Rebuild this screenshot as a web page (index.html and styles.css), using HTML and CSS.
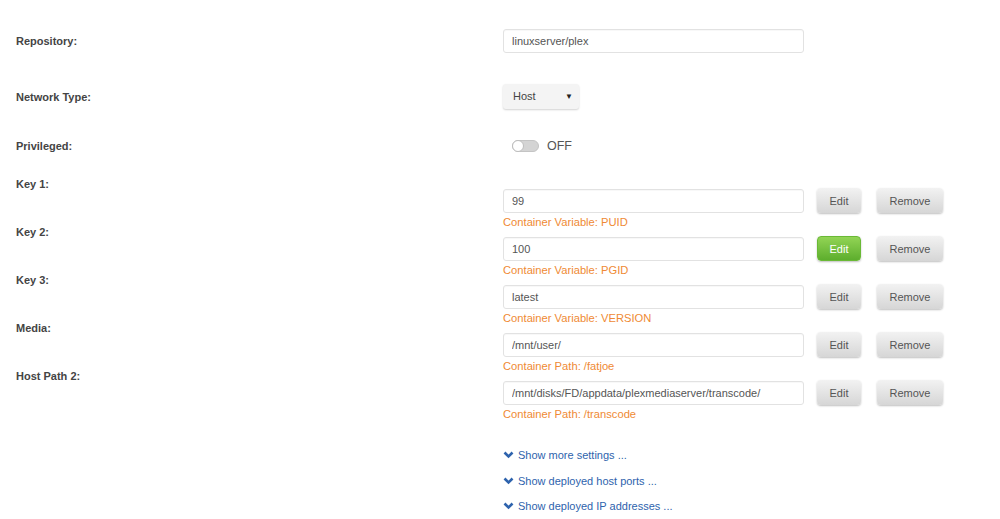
FILE: index.html
```html
<!DOCTYPE html>
<html lang="en">
<head>
  <meta charset="UTF-8" />
  <title>Docker template</title>
  <link rel="stylesheet" href="styles.css">
</head>
<body>
  <div class="form">
    <div class="row row-repo">
      <div class="name">Repository:</div>
      <div class="value"><input class="text" type="text" value="linuxserver/plex"></div>
    </div>

    <div class="row row-net">
      <div class="name">Network Type:</div>
      <div class="value">
        <span class="select">Host<span class="caret">&#9660;</span></span>
      </div>
    </div>

    <div class="row row-priv">
      <div class="name">Privileged:</div>
      <div class="value">
        <span class="switch"><span class="knob"></span></span>
        <span class="switch-label">OFF</span>
      </div>
    </div>

    <div class="row entry-row">
      <div class="name">Key 1:</div>
      <div class="value">
        <div class="entry">
          <input class="text" type="text" value="99">
          <button class="btn btn-edit">Edit</button>
          <button class="btn btn-remove">Remove</button>
        </div>
        <div class="hint">Container Variable: PUID</div>
      </div>
    </div>

    <div class="row entry-row">
      <div class="name">Key 2:</div>
      <div class="value">
        <div class="entry">
          <input class="text" type="text" value="100">
          <button class="btn btn-edit active">Edit</button>
          <button class="btn btn-remove">Remove</button>
        </div>
        <div class="hint">Container Variable: PGID</div>
      </div>
    </div>

    <div class="row entry-row">
      <div class="name">Key 3:</div>
      <div class="value">
        <div class="entry">
          <input class="text" type="text" value="latest">
          <button class="btn btn-edit">Edit</button>
          <button class="btn btn-remove">Remove</button>
        </div>
        <div class="hint">Container Variable: VERSION</div>
      </div>
    </div>

    <div class="row entry-row">
      <div class="name">Media:</div>
      <div class="value">
        <div class="entry">
          <input class="text" type="text" value="/mnt/user/">
          <button class="btn btn-edit">Edit</button>
          <button class="btn btn-remove">Remove</button>
        </div>
        <div class="hint">Container Path: /fatjoe</div>
      </div>
    </div>

    <div class="row entry-row">
      <div class="name">Host Path 2:</div>
      <div class="value">
        <div class="entry">
          <input class="text" type="text" value="/mnt/disks/FD/appdata/plexmediaserver/transcode/">
          <button class="btn btn-edit">Edit</button>
          <button class="btn btn-remove">Remove</button>
        </div>
        <div class="hint">Container Path: /transcode</div>
      </div>
    </div>

    <div class="row row-links">
      <div class="name"></div>
      <div class="value">
        <a class="more" href="#"><svg class="chev" width="11" height="8" viewBox="0 0 11 8"><polyline points="1.5,1.5 5.5,5.5 9.5,1.5" fill="none" stroke="#2e63ad" stroke-width="2.6"/></svg>Show more settings ...</a>
        <a class="more" href="#"><svg class="chev" width="11" height="8" viewBox="0 0 11 8"><polyline points="1.5,1.5 5.5,5.5 9.5,1.5" fill="none" stroke="#2e63ad" stroke-width="2.6"/></svg>Show deployed host ports ...</a>
        <a class="more" href="#"><svg class="chev" width="11" height="8" viewBox="0 0 11 8"><polyline points="1.5,1.5 5.5,5.5 9.5,1.5" fill="none" stroke="#2e63ad" stroke-width="2.6"/></svg>Show deployed IP addresses ...</a>
      </div>
    </div>
  </div>
</body>
</html>
```

FILE: styles.css
```css
body {
  margin: 0;
  background: #fff;
  font-family: "Liberation Sans", Arial, sans-serif;
  font-size: 11px;
  color: #555;
}
.form {
  padding: 29px 0 0 16px;
}
.row {
  display: grid;
  grid-template-columns: 487px 1fr;
  align-items: center;
}
.name {
  font-weight: bold;
  color: #444;
  font-size: 11px;
}
.row-repo {
  height: 24px;
}
.row-net {
  height: 25px;
  margin-top: 31px;
}
.row-priv {
  height: 24px;
  margin-top: 25px;
}
.text {
  box-sizing: border-box;
  width: 301px;
  height: 24px;
  margin: 0;
  padding: 0 8px;
  border: 1px solid #e2e2e2;
  border-radius: 3px;
  box-shadow: inset 0 1px 1px rgba(0,0,0,0.03);
  font-family: inherit;
  font-size: 11px;
  color: #555;
  outline: none;
}
.select {
  display: inline-flex;
  justify-content: space-between;
  align-items: center;
  box-sizing: border-box;
  width: 76px;
  height: 25px;
  padding: 0 6px 1px 10px;
  background: #f4f4f4;
  border-radius: 3px;
  box-shadow: 0 1px 2px rgba(0,0,0,0.18);
  color: #444;
  vertical-align: middle;
}
.caret {
  font-size: 8px;
  color: #222;
}
.value {
  display: flex;
  align-items: center;
}
.switch {
  position: relative;
  box-sizing: border-box;
  width: 27px;
  height: 12px;
  margin-left: 9px;
  border-radius: 6px;
  background: #d4d4d4;
  border: 1px solid #c4c4c4;
}
.knob {
  position: absolute;
  left: -1px;
  top: -1px;
  width: 12px;
  height: 12px;
  box-sizing: border-box;
  border-radius: 50%;
  background: #fff;
  border: 1px solid #bdbdbd;
}
.switch-label {
  margin-left: 8px;
  font-size: 12.5px;
  color: #555;
}
.entry-row {
  height: 48px;
  align-items: start;
}
.row-priv + .entry-row {
  margin-top: 23px;
}
.entry-row .name {
  line-height: 14px;
  margin-top: -4px;
}
.entry-row .value {
  display: block;
  padding-top: 8px;
}
.entry {
  display: flex;
  align-items: center;
  height: 24px;
}
.btn {
  box-sizing: border-box;
  height: 25px;
  margin-top: -1px;
  padding: 0;
  border: none;
  border-radius: 4px;
  background: linear-gradient(#f2f2f2, #d6d6d6);
  box-shadow: 0 1px 2px rgba(0,0,0,0.25);
  font-family: inherit;
  font-size: 11px;
  color: #555;
  cursor: pointer;
}
.btn-edit {
  width: 44px;
  margin-left: 13px;
}
.btn-remove {
  width: 66px;
  margin-left: 16px;
}
.btn-edit.active {
  background: linear-gradient(#92d455, #5dae2d);
  border: 1px solid #6ab936;
  color: #fff;
}
.hint {
  line-height: 16px;
  padding-top: 1px;
  font-size: 11.2px;
  color: #ef8a34;
}
.row-links {
  margin-top: 22px;
}
.row-links .value {
  display: block;
}
.more {
  display: block;
  line-height: 25.5px;
  font-size: 11px;
  color: #2e63ad;
  text-decoration: none;
}
.chev {
  margin-right: 4px;
  vertical-align: 0;
}
```
